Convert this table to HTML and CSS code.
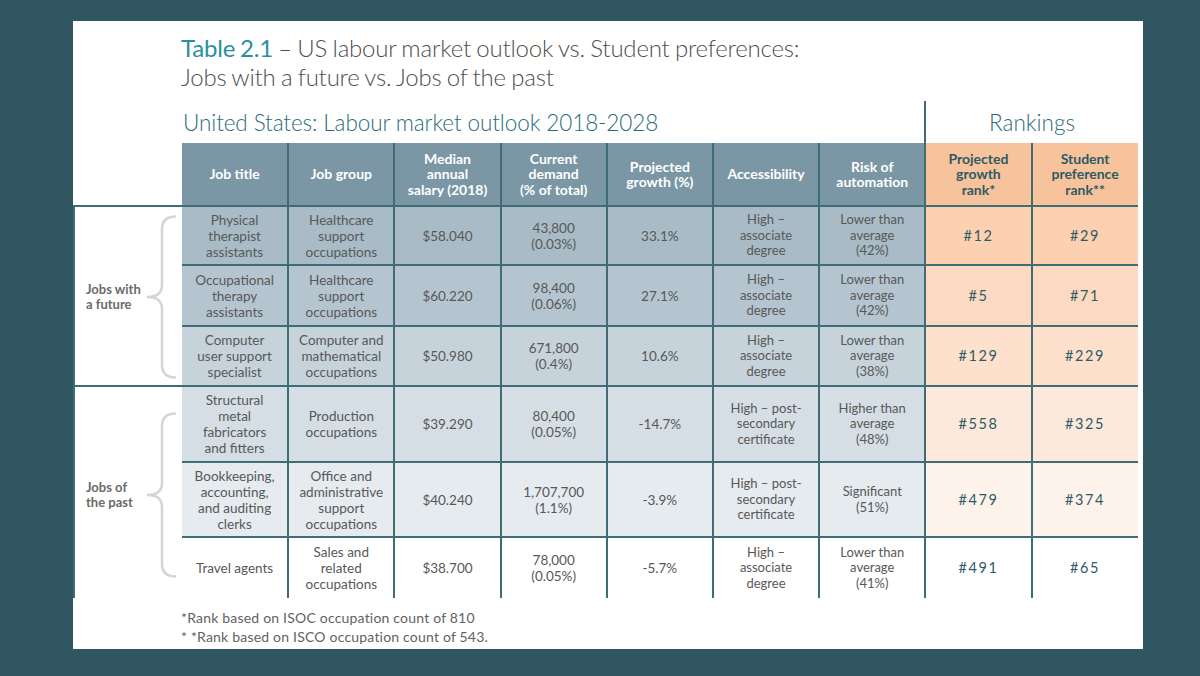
FILE: index.html
```html
<!DOCTYPE html>
<html lang="en">
<head>
<meta charset="utf-8">
<title>Table 2.1</title>
<link rel="stylesheet" href="styles.css">
</head>
<body>
<div class="page">
  <div class="card">
    <h1 class="title"><span class="num">Table 2.1</span> – US labour market outlook vs. Student preferences:<br>Jobs with a future vs. Jobs of the past</h1>
    <table class="jobs">
      <colgroup>
        <col class="col-group">
        <col class="col-data"><col class="col-data"><col class="col-data"><col class="col-data"><col class="col-data"><col class="col-data"><col class="col-data"><col class="col-data"><col class="col-data">
      </colgroup>
      <tr class="subhead">
        <td class="blank"></td>
        <td colspan="7" class="market">United States: Labour market outlook 2018-2028</td>
        <td colspan="2" class="rankings">Rankings</td>
      </tr>
      <tr class="head">
        <td class="blank"></td>
        <th class="first">Job title</th>
        <th>Job group</th>
        <th>Median<br>annual<br>salary (2018)</th>
        <th>Current<br>demand<br>(% of total)</th>
        <th>Projected<br>growth (%)</th>
        <th>Accessibility</th>
        <th>Risk of<br>automation</th>
        <th class="rank">Projected<br>growth<br>rank*</th>
        <th class="rank">Student<br>preference<br>rank**</th>
      </tr>
      <tr class="r1">
        <td rowspan="3" class="group g1">
          <div class="group-inner">
            <span class="group-label">Jobs with<br>a future</span>
            <svg class="brace" width="32" height="164" viewBox="0 0 32 164"><path d="M31 1.5 C22 1.5 17 5 17 14 L17 70 C17 78 12 82 2 82 C12 82 17 86 17 94 L17 150 C17 159 22 162.5 31 162.5" fill="none" stroke="#d3d6d8" stroke-width="2.6"/></svg>
          </div>
        </td>
        <td class="first">Physical<br>therapist<br>assistants</td>
        <td>Healthcare<br>support<br>occupations</td>
        <td>$58.040</td>
        <td>43,800<br>(0.03%)</td>
        <td>33.1%</td>
        <td class="small">High –<br>associate<br>degree</td>
        <td class="small">Lower than<br>average<br>(42%)</td>
        <td class="rank">#12</td>
        <td class="rank">#29</td>
      </tr>
      <tr class="r2">
        <td class="first">Occupational<br>therapy<br>assistants</td>
        <td>Healthcare<br>support<br>occupations</td>
        <td>$60.220</td>
        <td>98,400<br>(0.06%)</td>
        <td>27.1%</td>
        <td class="small">High –<br>associate<br>degree</td>
        <td class="small">Lower than<br>average<br>(42%)</td>
        <td class="rank">#5</td>
        <td class="rank">#71</td>
      </tr>
      <tr class="r3">
        <td class="first">Computer<br>user support<br>specialist</td>
        <td>Computer and<br>mathematical<br>occupations</td>
        <td>$50.980</td>
        <td>671,800<br>(0.4%)</td>
        <td>10.6%</td>
        <td class="small">High –<br>associate<br>degree</td>
        <td class="small">Lower than<br>average<br>(38%)</td>
        <td class="rank">#129</td>
        <td class="rank">#229</td>
      </tr>
      <tr class="r4">
        <td rowspan="3" class="group g2">
          <div class="group-inner">
            <span class="group-label">Jobs of<br>the past</span>
            <svg class="brace" width="32" height="166" viewBox="0 0 32 166"><path d="M31 1.5 C22 1.5 17 5 17 14 L17 71 C17 79 12 83 2 83 C12 83 17 87 17 95 L17 152 C17 161 22 164.5 31 164.5" fill="none" stroke="#d3d6d8" stroke-width="2.6"/></svg>
          </div>
        </td>
        <td class="first">Structural<br>metal<br>fabricators<br>and fitters</td>
        <td>Production<br>occupations</td>
        <td>$39.290</td>
        <td>80,400<br>(0.05%)</td>
        <td>-14.7%</td>
        <td class="small">High – post-<br>secondary<br>certificate</td>
        <td class="small">Higher than<br>average<br>(48%)</td>
        <td class="rank">#558</td>
        <td class="rank">#325</td>
      </tr>
      <tr class="r5">
        <td class="first">Bookkeeping,<br>accounting,<br>and auditing<br>clerks</td>
        <td>Office and<br>administrative<br>support<br>occupations</td>
        <td>$40.240</td>
        <td>1,707,700<br>(1.1%)</td>
        <td>-3.9%</td>
        <td class="small">High – post-<br>secondary<br>certificate</td>
        <td class="small">Significant<br>(51%)</td>
        <td class="rank">#479</td>
        <td class="rank">#374</td>
      </tr>
      <tr class="r6">
        <td class="first">Travel agents</td>
        <td>Sales and<br>related<br>occupations</td>
        <td>$38.700</td>
        <td>78,000<br>(0.05%)</td>
        <td>-5.7%</td>
        <td class="small">High –<br>associate<br>degree</td>
        <td class="small">Lower than<br>average<br>(41%)</td>
        <td class="rank">#491</td>
        <td class="rank">#65</td>
      </tr>
    </table>
    <div class="notes">
      <p>*Rank based on ISOC occupation count of 810</p>
      <p>* *Rank based on ISCO occupation count of 543.</p>
    </div>
  </div>
</div>
</body>
</html>
```
FILE: styles.css
```css
html, body {
  margin: 0;
  padding: 0;
}
body {
  background: #2f5661;
  font-family: "Lato", "Noto Sans", sans-serif;
  color: #555;
}
.page {
  padding: 21px 0 0 73px;
  height: 655px;
}
.card {
  width: 1070px;
  height: 628px;
  background: #fff;
  box-sizing: border-box;
  padding-top: 12px;
  overflow: hidden;
}
.title {
  margin: 0 0 10px 108px;
  font-size: 24px;
  line-height: 29px;
  font-weight: 300;
  color: #4f4f4f;
  letter-spacing: -0.2px;
  word-spacing: -1px;
}
.title .num {
  color: #2a8ea3;
  font-weight: 400;
}
.jobs {
  border-collapse: collapse;
  table-layout: fixed;
  width: 1064px;
}
.col-group { width: 108px; }
.col-data { width: 106.2px; }

.jobs td, .jobs th {
  padding: 0;
  text-align: center;
  vertical-align: middle;
}
.subhead td {
  height: 36px;
  vertical-align: bottom;
  padding-bottom: 6px;
}
.jobs .subhead td.market {
  text-align: left;
  font-size: 22.5px;
  line-height: 28px;
  font-weight: 300;
  color: #2c6c78;
  padding-left: 1px;
  white-space: nowrap;
  letter-spacing: -0.1px;
}
.jobs .subhead td.rankings {
  border-left: 2px solid #3f6c75;
  font-size: 22.5px;
  line-height: 28px;
  font-weight: 300;
  color: #2c6c78;
}
.head th {
  height: 62px;
  background: #7b96a5;
  color: #fff;
  font-size: 14px;
  line-height: 15.5px;
  font-weight: 700;
  border-left: 2px solid #3f6c75;
  border-bottom: 2px solid #3f6c75;
}
.head th.first { border-left: none; }
.head th.rank {
  background: #f7c39d;
  color: #2e5a64;
}
.jobs tr.r1 td, .jobs tr.r2 td, .jobs tr.r3 td,
.jobs tr.r4 td, .jobs tr.r5 td, .jobs tr.r6 td {
  font-size: 13.5px;
  line-height: 16px;
  color: #585858;
  border-left: 2px solid #3f6c75;
  border-top: 2px solid #3f6c75;
}
.jobs tr td.first { border-left: none; }
.jobs tr td.small { font-size: 13px; line-height: 15.5px; }
.jobs tr td.rank {
  color: #2e5a64;
  font-size: 14.5px;
  letter-spacing: 1.6px;
}
.r1 { height: 59px; }
.r2 { height: 61px; }
.r3 { height: 60px; }
.r4 { height: 76px; }
.r5 { height: 75px; }
.r6 { height: 61px; }

.r1 td { background: #a8bbc6; }
.r2 td { background: #b5c5cf; }
.r3 td { background: #c6d3da; }
.r4 td { background: #d5dee4; }
.r5 td { background: #e5ebef; }
.r6 td { background: #ffffff; }
.r1 td.rank { background: #fbd1b1; }
.r2 td.rank { background: #fcd9c0; }
.r3 td.rank { background: #fde1cd; }
.r4 td.rank { background: #fde9db; }
.r5 td.rank { background: #fef3eb; }
.r6 td.rank { background: #ffffff; }

.jobs td.group {
  background: #fff;
  border-left: none;
  border-top: none;
  padding: 0;
}
.jobs td.g2 {
  border-top: 2px solid #3f6c75;
}
.group-inner {
  display: flex;
  align-items: center;
  justify-content: space-between;
  padding: 0 5px 0 11px;
}
.group-label {
  font-size: 13px;
  line-height: 15px;
  font-weight: 700;
  color: #6a6a6a;
  text-align: left;
}
.brace { display: block; }
.g1 .group-inner { padding-top: 2px; }
.g2 .group-inner { padding-top: 4px; }

.notes {
  margin: 10px 0 0 108px;
  font-size: 14px;
  line-height: 19px;
  color: #626262;
  letter-spacing: 0.2px;
}
.notes p { margin: 0; }
```
